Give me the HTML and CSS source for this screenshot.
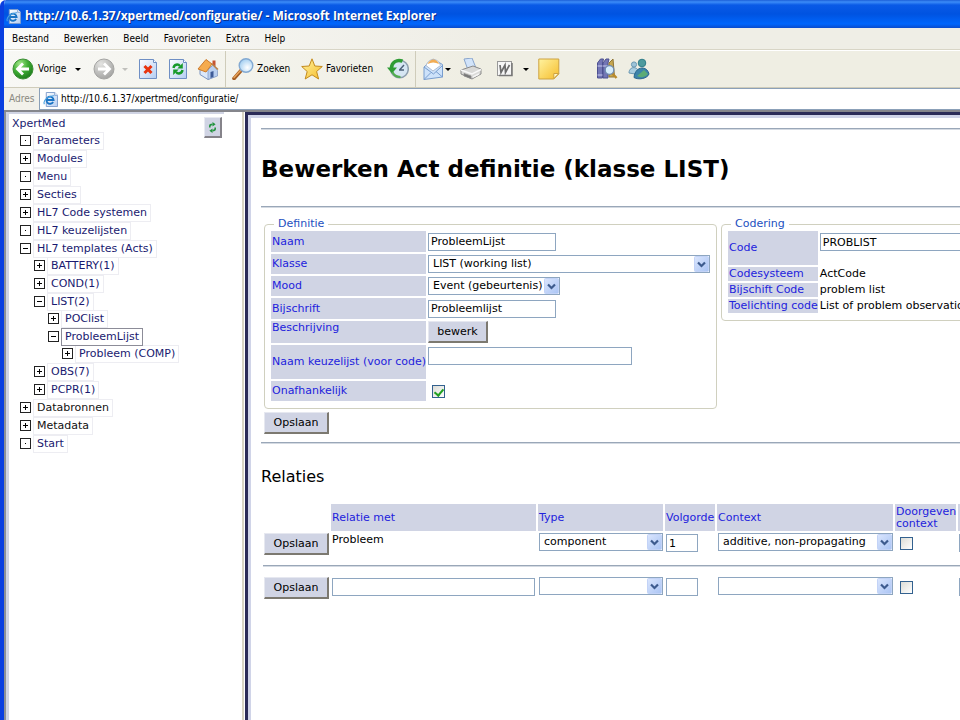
FILE: index.html
```html
<!DOCTYPE html>
<html lang="nl">
<head>
<meta charset="utf-8">
<title>http://10.6.1.37/xpertmed/configuratie/ - Microsoft Internet Explorer</title>
<link rel="stylesheet" href="styles.css">
</head>
<body>
<svg class="defs" aria-hidden="true">
  <defs>
    <linearGradient id="paper" x1="0" y1="0" x2="1" y2="1"><stop offset="0" stop-color="#fff"/><stop offset="1" stop-color="#b4cdf2"/></linearGradient>
    <radialGradient id="green" cx=".35" cy=".25" r=".8"><stop offset="0" stop-color="#a6e88c"/><stop offset=".5" stop-color="#3fae34"/><stop offset="1" stop-color="#1d7a1c"/></radialGradient>
    <radialGradient id="grey" cx=".35" cy=".25" r=".8"><stop offset="0" stop-color="#e4e4e2"/><stop offset="1" stop-color="#a2a2a0"/></radialGradient>
    <radialGradient id="lens" cx=".6" cy=".65" r=".7"><stop offset="0" stop-color="#fff"/><stop offset="1" stop-color="#9ccbf0"/></radialGradient>
    <linearGradient id="gold" x1="0" y1="0" x2="1" y2="1"><stop offset="0" stop-color="#fff3a0"/><stop offset="1" stop-color="#f6bd2c"/></linearGradient>
    <linearGradient id="drop" x1="0" y1="0" x2="1" y2="1"><stop offset="0" stop-color="#dbe6fd"/><stop offset="1" stop-color="#aac4f4"/></linearGradient>
    <symbol id="chevron" viewBox="0 0 15 16"><rect x=".5" y=".5" width="14" height="15" rx="1" fill="url(#drop)" stroke="#c3d3f7"/><path d="M4 6.5l3.5 3.5L11 6.5" fill="none" stroke="#3d5b8e" stroke-width="2.2"/></symbol>
    <symbol id="iepage" viewBox="0 0 16 16"><path d="M3.500.5h9l3 3v12h-12z" fill="url(#paper)" stroke="#7f9ccb"/><path d="M12.500.5v3h3" fill="#fff" stroke="#7f9ccb"/><path d="M10.800 10.700A3.800 3.800 0 1 1 11.300 8.500H4.500" fill="none" stroke="#1b74c4" stroke-width="2"/><path d="M1.500 13C-.5 9 6 3.500 12 4" fill="none" stroke="#4aa0e0" stroke-width="1.200"/></symbol>
    <symbol id="plus" viewBox="0 0 11 11"><rect x=".5" y=".5" width="10" height="10" fill="#fff" stroke="#222"/><path d="M3 5.500h5M5.500 3v5" stroke="#000"/></symbol>
    <symbol id="minus" viewBox="0 0 11 11"><rect x=".5" y=".5" width="10" height="10" fill="#fff" stroke="#222"/><path d="M3 5.500h5" stroke="#000"/></symbol>
    <symbol id="dot" viewBox="0 0 11 11"><rect x=".5" y=".5" width="10" height="10" fill="#fff" stroke="#222"/><path d="M5 5.500h1" stroke="#000"/></symbol>
  </defs>
</svg>
<div class="window">
  <header class="titlebar">
    <svg class="ie-icon" aria-hidden="true"><use href="#iepage"/></svg>
    <span>http://10.6.1.37/xpertmed/configuratie/ - Microsoft Internet Explorer</span>
  </header>

  <nav class="menubar">
    <button>Bestand</button><button>Bewerken</button><button>Beeld</button><button>Favorieten</button><button>Extra</button><button>Help</button>
  </nav>

  <div class="toolbar">
    <button class="back"><svg viewBox="0 0 22 22"><circle cx="11" cy="11" r="10" fill="url(#green)" stroke="#3c8d35"/><path d="M17 11H6M11 5.500L5.500 11l5.500 5.500" fill="none" stroke="#fff" stroke-width="2.800"/></svg>Vorige</button>
    <button class="arrow" aria-label="Vorige pagina's"></button>
    <button class="forward" aria-label="Volgende"><svg viewBox="0 0 22 22"><circle cx="11" cy="11" r="10" fill="url(#grey)" stroke="#a4a4a2"/><path d="M5 11h11M11 5.500l5.500 5.500-5.500 5.500" fill="none" stroke="#fff" stroke-width="2.800"/></svg></button>
    <button class="arrow faded" aria-label="Volgende pagina's"></button>
    <button class="stop" aria-label="Stoppen"><svg viewBox="0 0 22 22"><path d="M2.500 1.500h14l3 3v16h-17z" fill="url(#paper)" stroke="#6f8fc4"/><path d="M16.500 1.500v3h3" fill="#fff" stroke="#6f8fc4"/><path d="M7.500 8l7 7M14.500 8l-7 7" stroke="#e8340f" stroke-width="3"/></svg></button>
    <button class="refresh" aria-label="Vernieuwen"><svg viewBox="0 0 22 22"><path d="M2.500 1.500h14l3 3v16h-17z" fill="url(#paper)" stroke="#6f8fc4"/><path d="M16.500 1.500v3h3" fill="#fff" stroke="#6f8fc4"/><path d="M6.500 10C7 6.500 11 5.500 13 8M15.500 12c-.5 3.500-4.500 4.500-6.500 2" fill="none" stroke="#189a2a" stroke-width="2.400"/><path d="M15.800 5v5.500h-5.500zM6.200 17v-5.500h5.500z" fill="#189a2a"/></svg></button>
    <button class="home" aria-label="Startpagina"><svg viewBox="0 0 22 22"><path d="M3 11l7-6 9 7v6l-8 3.500-8-5z" fill="#dbe8fa" stroke="#7b94c0"/><path d="M11 12l5-5 4.500 5.500v5.500L11 21.500z" fill="#b9cff0" stroke="#7b94c0" stroke-width=".7"/><path d="M15.500 2.500h3v6l-3-2z" fill="#c65332"/><path d="M1 11L9 1.500l6 4.500-6 8z" fill="#f5ab4e" stroke="#cc7a2c"/><path d="M14.500 5.500l6.500 6" stroke="#b98044" stroke-width="1.500"/><path d="M13.500 14l3-1v6l-3 1z" fill="#3e5b97"/></svg></button>
    <span class="sep"></span>
    <button class="search"><svg viewBox="0 0 22 22"><path d="M2 20.500L9.500 12" stroke="#a55e25" stroke-width="3.600" stroke-linecap="round"/><path d="M2 19.500L9 12" stroke="#e9a55c" stroke-width="1.400" stroke-linecap="round"/><circle cx="14" cy="7.500" r="6.800" fill="url(#lens)" stroke="#83a9d2" stroke-width="1.400"/></svg>Zoeken</button>
    <button class="favs"><svg viewBox="0 0 22 22"><path d="M11 .8l2.800 7.200 7.500.5-5.700 5 2 7.500-6.600-4.200L4.200 21l2-7.500L.7 8.500l7.500-.5z" fill="url(#gold)" stroke="#c38a1d"/></svg>Favorieten</button>
    <button class="history" aria-label="Geschiedenis"><svg viewBox="0 0 22 22"><circle cx="12.500" cy="11" r="8.800" fill="#d6e6f3" stroke="#8d9eae" stroke-width="1.500"/><path d="M12.500 12l4.500-5M12 12h5" stroke="#4c6078" stroke-width="1.400"/><path d="M15.500 3.200C10 .8 4.500 4.500 4.500 10" fill="none" stroke="#2f9c35" stroke-width="3.500"/><path d="M0 9.500h10L5 15.500z" fill="#2f9c35"/><path d="M5.500 14c1.500 3.500 4.500 5 8 5" fill="none" stroke="#52ac50" stroke-width="2"/></svg></button>
    <span class="sep"></span>
    <button class="mail" aria-label="E-mail"><svg viewBox="0 0 22 22"><path d="M2 9l9-8 9.500 5.500V19L2 21.500z" fill="#cde2fa" stroke="#789dce"/><path d="M4 7.500C7-.5 16-.5 18.500 7.500L11 13z" fill="#fff" stroke="#aebbd0"/><path d="M5.500 6c3-6 9-6 11.500 0-4-2-7.500-2-11.500 0z" fill="#f2ad55"/><path d="M2 9l9.500 7 9-8.500M2 21.500l7-7M20.500 19L14 13.500" fill="none" stroke="#789dce"/></svg></button>
    <button class="arrow tight" aria-label="E-mailopties"></button>
    <button class="print" aria-label="Afdrukken"><svg viewBox="0 0 22 22"><path d="M4 1l8-1 4 10-8 2z" fill="#d2e4fa" stroke="#89a5cc"/><path d="M1 12l12-4 8 3v5l-9 5-11-5z" fill="#d9d9d7" stroke="#8b8b8b"/><path d="M1 12l11 4 9-4.500" fill="none" stroke="#f8f8f8" stroke-width="1.400"/><path d="M4 15.500l7 2.500v2.500l-7-2.500z" fill="#777" stroke="#8b8b8b" stroke-width=".8"/><path d="M13 19l6-3" stroke="#f4f4f4" stroke-width="1.500"/></svg></button>
    <button class="word" aria-label="Bewerken met Word"><svg viewBox="0 0 22 22"><rect x="3.500" y="3.500" width="14" height="14" fill="#f6f6f6" stroke="#999"/><path d="M5 17.500h13V5" fill="none" stroke="#777" stroke-width="1.500"/><path d="M6 7l1 7.500L11 7l.5 7.500L15.500 7" fill="none" stroke="#6c6c6c" stroke-width="1.700"/></svg></button>
    <button class="arrow edit" aria-label="Bewerkingsopties"></button>
    <button class="note" aria-label="Notitie"><svg viewBox="0 0 22 22"><path d="M.8 1h20v15l-5 5h-15z" fill="url(#gold)" stroke="#cda342"/><path d="M20.800 15.500h-5v5z" fill="#fff6c6" stroke="#cda342"/></svg></button>
    <button class="books" aria-label="Onderzoek"><svg viewBox="0 0 22 22"><path d="M1.500 5l3-4h3l-1 4v15h-5zM7 5l3-4h3l-1 4v15H7z" fill="#7376b5" stroke="#4d5090"/><path d="M1.500 8h5M7 8h5M1.500 17h5" stroke="#c9caf0"/><path d="M13 5l4-4 1.500 18H13z" fill="#c7a750" stroke="#8e7435"/><path d="M16 15l4.500 5" stroke="#b98a2c" stroke-width="2.500"/><circle cx="13.500" cy="12" r="4.300" fill="#d5ecfc" stroke="#6f8bb2" stroke-width="1.300"/></svg></button>
    <button class="people" aria-label="Messenger"><svg viewBox="0 0 22 22"><circle cx="6" cy="6.500" r="2.600" fill="#9cc3d8" stroke="#6b98b2"/><path d="M1 15c0-7 9-7 9.500-1L7 16z" fill="#a9cde0" stroke="#6b98b2"/><circle cx="14" cy="5" r="3.800" fill="#4e9a9e" stroke="#2f7c88"/><path d="M6 19.500C7 8 19 7 21 16c-2 5-11 6-15 3.500z" fill="#3b83aa" stroke="#2a668d"/><path d="M9 18c3 2 8 1.500 11-2l-4-4z" fill="#5bab76"/></svg></button>
  </div>

  <div class="address">
    <label for="url">Adres</label>
    <div class="url-box"><svg class="ie-icon" aria-hidden="true"><use href="#iepage"/></svg><input id="url" type="text" value="http://10.6.1.37/xpertmed/configuratie/"></div>
  </div>

  <div class="frames">
    <aside class="sidebar">
      <div class="side-head"><span>XpertMed</span>
        <button class="reload" aria-label="Vernieuwen"><svg viewBox="0 0 10 12"><path d="M2 6V4.500C2 3 3 2.500 5 2.500M8 6v1.500C8 9 7 9.500 5 9.500" fill="none" stroke="#249440" stroke-width="1.800"/><path d="M5 0l3.500 2.500L5 5zM5 7v5L1.500 9.500z" fill="#249440"/></svg></button>
      </div>
      <ul class="tree">
        <li><svg><use href="#dot"/></svg><a href="#">Parameters</a></li>
        <li><svg><use href="#plus"/></svg><a href="#">Modules</a></li>
        <li><svg><use href="#dot"/></svg><a href="#">Menu</a></li>
        <li><svg><use href="#plus"/></svg><a href="#">Secties</a></li>
        <li><svg><use href="#plus"/></svg><a href="#">HL7 Code systemen</a></li>
        <li><svg><use href="#dot"/></svg><a href="#">HL7 keuzelijsten</a></li>
        <li><svg><use href="#minus"/></svg><a href="#">HL7 templates (Acts)</a>
          <ul>
            <li><svg><use href="#plus"/></svg><a href="#">BATTERY(1)</a></li>
            <li><svg><use href="#plus"/></svg><a href="#">COND(1)</a></li>
            <li><svg><use href="#minus"/></svg><a href="#">LIST(2)</a>
              <ul>
                <li><svg><use href="#plus"/></svg><a href="#">POClist</a></li>
                <li><svg><use href="#minus"/></svg><a href="#" class="selected">ProbleemLijst</a>
                  <ul>
                    <li><svg><use href="#plus"/></svg><a href="#">Probleem (COMP)</a></li>
                  </ul>
                </li>
              </ul>
            </li>
            <li><svg><use href="#plus"/></svg><a href="#">OBS(7)</a></li>
            <li><svg><use href="#plus"/></svg><a href="#">PCPR(1)</a></li>
          </ul>
        </li>
        <li><svg><use href="#plus"/></svg><a href="#" class="plain">Databronnen</a></li>
        <li><svg><use href="#plus"/></svg><a href="#" class="plain">Metadata</a></li>
        <li><svg><use href="#dot"/></svg><a href="#">Start</a></li>
      </ul>
    </aside>

    <main class="content">
      <hr>
      <h1>Bewerken Act definitie (klasse LIST)</h1>
      <hr>
      <form class="definition">
        <div class="panels">
          <fieldset>
            <legend>Definitie</legend>
            <table class="fields">
              <tr class="entry"><th><label for="naam">Naam</label></th><td><input class="box medium" id="naam" type="text" value="ProbleemLijst"></td></tr>
              <tr><th><label for="klasse">Klasse</label></th><td><span class="combo wide"><select id="klasse"><option>LIST (working list)</option></select><svg><use href="#chevron"/></svg></span></td></tr>
              <tr><th><label for="mood">Mood</label></th><td><span class="combo mood"><select id="mood"><option>Event (gebeurtenis)</option></select><svg><use href="#chevron"/></svg></span></td></tr>
              <tr class="entry"><th><label for="bijschrift">Bijschrift</label></th><td><input class="box medium" id="bijschrift" type="text" value="Probleemlijst"></td></tr>
              <tr class="describe"><th>Beschrijving</th><td><button type="button" class="push small">bewerk</button></td></tr>
              <tr class="tall"><th><label for="keuze">Naam keuzelijst (voor code)</label></th><td><input class="box long" id="keuze" type="text"></td></tr>
              <tr><th><label for="onaf">Onafhankelijk</label></th><td><input id="onaf" type="checkbox" checked></td></tr>
            </table>
          </fieldset>
          <fieldset class="coding">
            <legend>Codering</legend>
            <table class="fields">
              <tr class="tall"><th><label for="code">Code</label></th><td><input class="box long" id="code" type="text" value="PROBLIST"></td></tr>
              <tr class="text"><th>Codesysteem</th><td>ActCode</td></tr>
              <tr class="text"><th>Bijschift Code</th><td>problem list</td></tr>
              <tr class="text"><th>Toelichting code</th><td>List of problem observations</td></tr>
            </table>
          </fieldset>
        </div>
        <button type="button" class="push save">Opslaan</button>
      </form>
      <hr>
      <h2>Relaties</h2>
      <table class="relations">
        <colgroup><col class="c-save"><col class="c-rel"><col class="c-type"><col class="c-order"><col class="c-context"><col class="c-pass"><col class="c-more"></colgroup>
        <thead>
          <tr><td></td><th>Relatie met</th><th>Type</th><th>Volgorde</th><th>Context</th><th>Doorgeven context</th><th></th></tr>
        </thead>
        <tbody>
          <tr>
            <td><button type="button" class="push">Opslaan</button></td>
            <td class="name">Probleem</td>
            <td><span class="combo"><select aria-label="Type"><option>component</option></select><svg><use href="#chevron"/></svg></span></td>
            <td><input class="box order" type="text" value="1" aria-label="Volgorde"></td>
            <td><span class="combo"><select aria-label="Context"><option>additive, non-propagating</option></select><svg><use href="#chevron"/></svg></span></td>
            <td><input type="checkbox" aria-label="Doorgeven context"></td>
            <td><input class="box fill" type="text" aria-label="Waarde"></td>
          </tr>
          <tr class="rule"><td colspan="7"><hr></td></tr>
          <tr>
            <td><button type="button" class="push">Opslaan</button></td>
            <td><input class="box fill" type="text" aria-label="Relatie met"></td>
            <td><span class="combo"><select aria-label="Type"><option></option></select><svg><use href="#chevron"/></svg></span></td>
            <td><input class="box order" type="text" aria-label="Volgorde"></td>
            <td><span class="combo"><select aria-label="Context"><option></option></select><svg><use href="#chevron"/></svg></span></td>
            <td><input type="checkbox" aria-label="Doorgeven context"></td>
            <td><input class="box fill" type="text" aria-label="Waarde"></td>
          </tr>
        </tbody>
      </table>
    </main>
  </div>
</div>
</body>
</html>
```
FILE: styles.css
```css
* { box-sizing: border-box; }
body {
  margin: 0;
  background: #fff;
  color: #000;
  font: 11px/14px "DejaVu Sans", Verdana, sans-serif;
  overflow: hidden;
}
button, input, select { font: inherit; color: inherit; margin: 0; }
.defs { position: absolute; width: 0; height: 0; }

.window {
  display: flex;
  flex-direction: column;
  min-height: 100vh;
  border-left: 4px solid #0a3fe0;
  border-top-left-radius: 6px;
  overflow: hidden;
}
.titlebar {
  display: flex;
  align-items: center;
  gap: 4px;
  height: 28px;
  margin-left: -4px;
  padding: 4px 0 0 6px;
  background: linear-gradient(#1c5fd8 0, #3c8cf8 2px, #0a5ae6 5px, #0053e1 14px, #0066fc 24px, #0a4ccc 28px);
  color: #fff;
  font: bold 12px/16px "Open Sans", "Trebuchet MS", sans-serif;
  text-shadow: 1px 1px #0a2f8c;
  white-space: nowrap;
}
.ie-icon { width: 15px; height: 15px; flex: none; }

.menubar {
  display: flex;
  gap: 15px;
  height: 22px;
  padding-left: 8px;
  background: linear-gradient(90deg, #fafaf9, #efeee6 50%);
  border-bottom: 1px solid #d8d5c6;
}
.menubar, .toolbar, .address { font-family: "DejaVu Sans Condensed", Tahoma, sans-serif; font-size: 10px; }
.menubar button, .toolbar button { border: 0; padding: 0; background: none; }

.toolbar {
  display: flex;
  align-items: center;
  height: 38px;
  padding-left: 8px;
  background: linear-gradient(90deg, #f8f8f5, #efeee3 50%);
  border-top: 1px solid #fff;
  border-bottom: 1px solid #cfccba;
}
.toolbar button { display: flex; align-items: center; flex: none; gap: 4px; width: 22px; height: 30px; white-space: nowrap; }
.toolbar svg { width: 22px; height: 22px; flex: none; }
.toolbar .back { width: 58px; }
.toolbar .arrow { width: 16px; justify-content: center; }
.arrow::before { content: ""; border: 3px solid transparent; border-top-color: #000; border-bottom: 0; }
.faded::before { border-top-color: #c0c0bc; }
.toolbar .forward { margin: 0 2px 0 7px; }
.toolbar .stop { margin-left: 4px; }
.toolbar .refresh, .toolbar .home { margin-left: 8px; }
.sep { width: 1px; height: 36px; margin: 0 6px; background: #cfccba; }
.toolbar .search { width: 59px; gap: 3px; }
.toolbar .favs { width: 76px; gap: 3px; margin: 0 10px; }
.toolbar .tight { width: 8px; }
.toolbar .print { margin: 0 12px 0 8px; }
.toolbar .edit { margin: 0 4px 0 2px; }
.toolbar .books { margin: 0 10px 0 36px; }

.address {
  display: flex;
  align-items: stretch;
  height: 22px;
  padding-left: 5px;
  background: #f2f1ea;
  color: #8a897f;
}
.address label { width: 30px; line-height: 22px; }
.url-box {
  display: flex;
  flex: 1;
  align-items: center;
  gap: 3px;
  padding-left: 3px;
  border: 1px solid #8ba0b8;
  border-width: 1px 0 1px 1px;
  background: #fff;
}
.url-box input { flex: 1; border: 0; padding: 0; background: none; color: #000; }

.frames { display: flex; flex: 1; border-top: 2px solid #85868c; }
.sidebar {
  flex: none;
  width: 240px;
  padding: 5px 20px 0 3px;
  border-left: 2px solid #8c9096;
  border-right: 2px solid #d9d5c4;
  box-shadow: inset 3px 0 #d0d4e4;
  background: linear-gradient(#d0d4e4, #d0d4e4) 0 0 / 218px 2px no-repeat #fff;
  color: #1a1a70;
}
.side-head { display: flex; justify-content: space-between; height: 21px; padding-left: 3px; }
.reload {
  display: flex;
  align-items: center;
  justify-content: center;
  width: 18px;
  height: 21px;
  padding: 0;
  background: #d0d4e4;
  border: 1px solid #e8eaf2;
  border-right: 2px solid #85838a;
  border-bottom: 2px solid #85838a;
}
.reload svg { width: 9px; height: 11px; flex: none; }
.tree, .tree ul { margin: 0; padding: 0; list-style: none; }
.tree { padding-left: 11px; margin-top: -6px; }
.tree ul { padding-left: 14px; margin-top: -1px; }
.tree svg { width: 11px; height: 11px; vertical-align: top; margin: 3px 2px 0 0; }
.tree li { line-height: 18px; white-space: nowrap; }
.tree a {
  display: inline-block;
  height: 18px;
  padding: 0 3px;
  border: 1px solid #ededf2;
  line-height: 16px;
  vertical-align: top;
  color: #1a1a70;
  text-decoration: none;
}
.tree a.plain { color: #111; }
.tree a.selected { position: relative; border-color: #8c8c98; }

.content {
  flex: 1;
  min-width: 0;
  overflow: hidden;
  padding: 13px 0 0 9px;
  margin-left: 1px;
  border-left: 3px solid #2c2c58;
  border-top: 3px solid #2c2c58;
  box-shadow: inset 3px 3px #d0d4e8;
  white-space: nowrap;
}
.content > * { margin-left: 4px; }
.panels { margin-left: 3px; }
hr { height: 2px; margin: 0; border: 0; background: #9aa7b8; border-bottom: 1px solid #d4dae2; }
h1 { margin-top: 24px; margin-bottom: 22px; font-size: 23px; line-height: 30px; }
h2 { margin-top: 23px; margin-bottom: 15px; font-size: 16px; font-weight: normal; line-height: 20px; }
.definition { padding: 9px 0 8px; }
.panels { display: flex; align-items: flex-start; gap: 4px; }
fieldset {
  flex: none;
  width: 453px;
  min-width: 0;
  margin: 0;
  padding: 0 5px 5px;
  border: 1px solid #d0d0bf;
  border-radius: 4px;
}
.coding { width: 360px; }
legend { margin-left: 4px; padding: 0 4px; color: #1c4fc0; line-height: 14px; }
.fields { border-spacing: 2px; margin: -2px 0 0 -1px; }
.fields td { padding: 0; vertical-align: middle; }
.fields th, .relations th { padding: 0 0 0 1px; background: #d0d4e4; color: #2222dd; font-weight: normal; text-align: left; }
.fields th { width: 154px; height: 20px; }
.coding th { width: 88px; }
.fields .entry th { height: 21px; }
.fields .describe th { height: 22px; vertical-align: top; }
.fields .tall th { height: 34px; }
.fields .tall td { vertical-align: top; padding-top: 2px; }
.fields .text th { height: 14px; }
.box {
  display: block;
  height: 18px;
  padding: 0 2px;
  border: 1px solid #8ea6c0;
  background: #fff;
}
.medium { width: 128px; }
.long { width: 204px; }
.order { width: 32px; }
.fill { width: 100%; }
.combo { display: block; position: relative; }
.combo select {
  display: block;
  width: 100%;
  height: 18px;
  padding: 0 0 0 4px;
  border: 1px solid #8ea6c0;
  border-radius: 0;
  appearance: none;
  background: #fff;
}
.combo svg { position: absolute; right: 1px; top: 1px; width: 15px; height: 16px; pointer-events: none; }
.wide { width: 282px; }
.mood { width: 132px; }
.push {
  display: block;
  width: 65px;
  height: 22px;
  padding: 0;
  background: #d0d4e4;
  border: 1px solid #e6e8f0;
  border-right: 2px solid #7c7970;
  border-bottom: 2px solid #7c7970;
}
.small { width: 60px; }
.save { margin: 3px 0 0 3px; }
input[type="checkbox"] {
  display: block;
  appearance: none;
  width: 13px;
  height: 13px;
  margin-left: 4px;
  border: 1px solid #33618f;
  background: linear-gradient(135deg, #dcdcd6, #fff);
  position: relative;
}
input[type="checkbox"]:checked::after {
  content: "";
  position: absolute;
  left: 3px;
  top: 1px;
  width: 4px;
  height: 7px;
  border: solid #21a121;
  border-width: 0 2px 2px 0;
  transform: rotate(40deg);
}
.relations { table-layout: fixed; width: 780px; border-spacing: 2px; }
.relations th { height: 27px; line-height: 12px; white-space: normal; }
.relations td { padding: 0; height: 22px; vertical-align: top; }
.relations td.name { padding-left: 1px; }
.relations .combo, .relations .box, .relations .push { margin-left: 1px; }
.relations .box { margin-top: 1px; }
.relations input[type="checkbox"] { margin: 4px 0 0 5px; }
.relations .fill { width: 203px; }
.relations .rule td { height: 18px; vertical-align: middle; }
.c-save { width: 66px; }
.c-rel { width: 205px; }
.c-type { width: 125px; }
.c-order { width: 50px; }
.c-context { width: 176px; }
.c-pass { width: 61px; }
```
